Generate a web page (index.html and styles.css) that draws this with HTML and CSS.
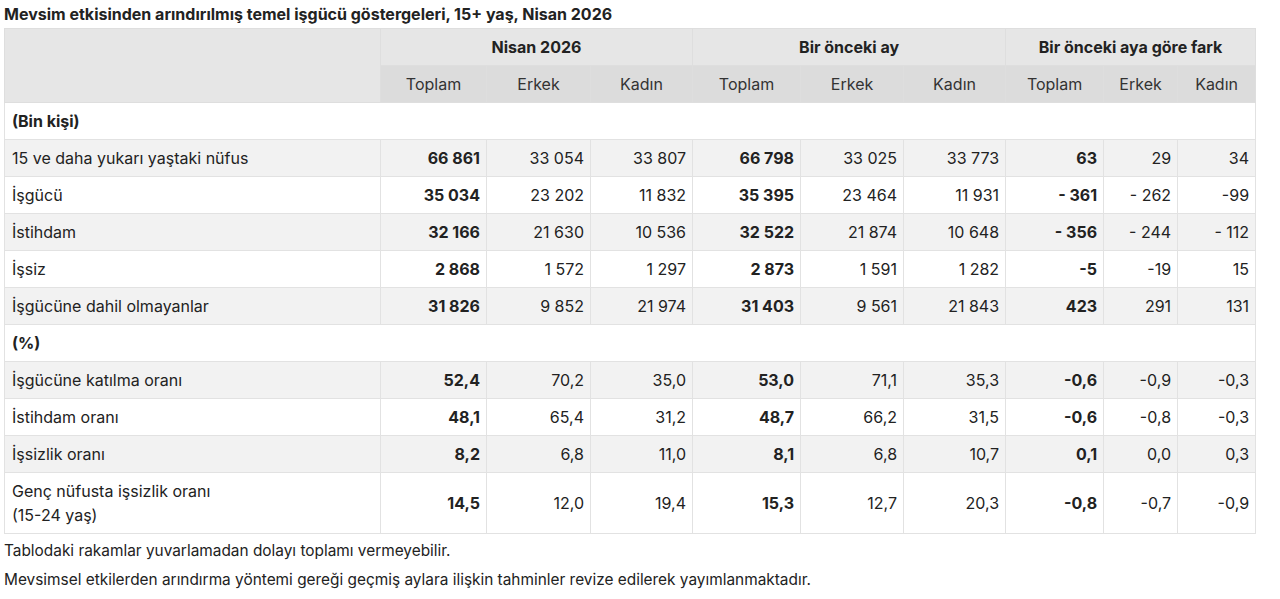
FILE: index.html
```html
<!DOCTYPE html>
<html lang="tr">
<head>
<meta charset="utf-8">
<title>Temel işgücü göstergeleri</title>
<link rel="stylesheet" href="styles.css">
</head>
<body>
<div class="page">
  <h1 class="title">Mevsim etkisinden arındırılmış temel işgücü göstergeleri, 15+ yaş, Nisan 2026</h1>
  <table class="data">
    <colgroup>
      <col class="c-label">
      <col class="c-106"><col class="c-104"><col class="c-102">
      <col class="c-108"><col class="c-103"><col class="c-102">
      <col class="c-98"><col class="c-74"><col class="c-78">
    </colgroup>
    <thead>
      <tr class="h1">
        <th rowspan="2" class="corner"></th>
        <th colspan="3">Nisan 2026</th>
        <th colspan="3">Bir önceki ay</th>
        <th colspan="3">Bir önceki aya göre fark</th>
      </tr>
      <tr class="h2">
        <th>Toplam</th><th>Erkek</th><th>Kadın</th>
        <th>Toplam</th><th>Erkek</th><th>Kadın</th>
        <th>Toplam</th><th>Erkek</th><th>Kadın</th>
      </tr>
    </thead>
    <tbody>
      <tr class="section"><td colspan="10">(Bin kişi)</td></tr>
      <tr><td>15 ve daha yukarı yaştaki nüfus</td><td class="b">66 861</td><td>33 054</td><td>33 807</td><td class="b">66 798</td><td>33 025</td><td>33 773</td><td class="b">63</td><td>29</td><td>34</td></tr>
      <tr><td>İşgücü</td><td class="b">35 034</td><td>23 202</td><td>11 832</td><td class="b">35 395</td><td>23 464</td><td>11 931</td><td class="b">- 361</td><td>- 262</td><td>-99</td></tr>
      <tr><td>İstihdam</td><td class="b">32 166</td><td>21 630</td><td>10 536</td><td class="b">32 522</td><td>21 874</td><td>10 648</td><td class="b">- 356</td><td>- 244</td><td>- 112</td></tr>
      <tr><td>İşsiz</td><td class="b">2 868</td><td>1 572</td><td>1 297</td><td class="b">2 873</td><td>1 591</td><td>1 282</td><td class="b">-5</td><td>-19</td><td>15</td></tr>
      <tr><td>İşgücüne dahil olmayanlar</td><td class="b">31 826</td><td>9 852</td><td>21 974</td><td class="b">31 403</td><td>9 561</td><td>21 843</td><td class="b">423</td><td>291</td><td>131</td></tr>
      <tr class="section"><td colspan="10">(%)</td></tr>
      <tr><td>İşgücüne katılma oranı</td><td class="b">52,4</td><td>70,2</td><td>35,0</td><td class="b">53,0</td><td>71,1</td><td>35,3</td><td class="b">-0,6</td><td>-0,9</td><td>-0,3</td></tr>
      <tr><td>İstihdam oranı</td><td class="b">48,1</td><td>65,4</td><td>31,2</td><td class="b">48,7</td><td>66,2</td><td>31,5</td><td class="b">-0,6</td><td>-0,8</td><td>-0,3</td></tr>
      <tr><td>İşsizlik oranı</td><td class="b">8,2</td><td>6,8</td><td>11,0</td><td class="b">8,1</td><td>6,8</td><td>10,7</td><td class="b">0,1</td><td>0,0</td><td>0,3</td></tr>
      <tr><td>Genç nüfusta işsizlik oranı<br>(15-24 yaş)</td><td class="b">14,5</td><td>12,0</td><td>19,4</td><td class="b">15,3</td><td>12,7</td><td>20,3</td><td class="b">-0,8</td><td>-0,7</td><td>-0,9</td></tr>
    </tbody>
  </table>
  <p class="note">Tablodaki rakamlar yuvarlamadan dolayı toplamı vermeyebilir.</p>
  <p class="note">Mevsimsel etkilerden arındırma yöntemi gereği geçmiş aylara ilişkin tahminler revize edilerek yayımlanmaktadır.</p>
</div>
</body>
</html>
```

FILE: styles.css
```css
* { box-sizing: border-box; }
html, body { margin: 0; padding: 0; background: #fff; }
body {
  font-family: Inter, "Noto Sans", "Liberation Sans", sans-serif;
  color: #222;
  font-size: 16px;
}
.page { padding: 4px 4px 0 4px; }
.title {
  margin: 0 0 4px 0;
  font-size: 16px;
  font-weight: 700;
  line-height: 20px;
  color: #222;
}
.data {
  border-collapse: collapse;
  table-layout: fixed;
  width: 1252px;
}
.c-label { width: 376px; }
.c-106 { width: 106px; }
.c-104 { width: 104px; }
.c-102 { width: 102px; }
.c-108 { width: 108px; }
.c-103 { width: 103px; }
.c-98 { width: 98px; }
.c-74 { width: 74px; }
.c-78 { width: 78px; }
.data th, .data td {
  border: 1px solid #e2e2e2;
  padding: 6px 6px;
  line-height: 24px;
  height: 37px;
}
.data th { font-weight: 400; text-align: center; color: #333; }
.h1 th { background: #e6e6e6; font-weight: 700; color: #222; }
.h2 th { background: #dcdcdc; }
.h2 th, .h1 th { border-color: #dedede; }
.corner { background: #e6e6e6; }
.data td { text-align: right; }
.data td:first-child { text-align: left; padding-left: 7px; }
.data tbody tr:nth-child(even) td { background: #f2f2f2; }
.section td { font-weight: 700; background: #fff; }
.data td.b { font-weight: 700; }
.note {
  margin: 6px 0 8px 0;
  font-size: 15.4px;
  line-height: 21px;
  color: #222;
}
```
